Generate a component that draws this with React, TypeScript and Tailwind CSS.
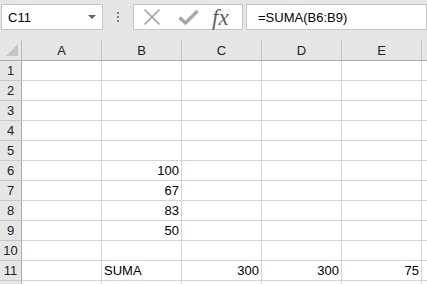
import React from "react";

const cols = ["A", "B", "C", "D", "E"];

type Cell = { v: string; left?: boolean };
const data: Record<number, Record<string, Cell>> = {
  6: { B: { v: "100" } },
  7: { B: { v: "67" } },
  8: { B: { v: "83" } },
  9: { B: { v: "50" } },
  11: {
    B: { v: "SUMA", left: true },
    C: { v: "300" },
    D: { v: "300" },
    E: { v: "75" },
  },
};

const rows = [1, 2, 3, 4, 5, 6, 7, 8, 9, 10, 11, 12];

export default function App() {
  return (
    <div
      className="w-[427px] h-[284px] overflow-hidden bg-white text-[13px] text-black"
      style={{ fontFamily: '"Liberation Sans", Arial, sans-serif' }}
    >
      {/* Formula bar */}
      <div className="h-[40px] bg-[#e6e6e6] flex items-start pt-[4px] pl-[1px]">
        <div className="w-[102px] h-[26px] shrink-0 bg-white border border-[#c6c6c6] flex items-center pl-[6px] pr-[6px]">
          <span className="flex-1 leading-none">C11</span>
          <svg width="8" height="4" viewBox="0 0 8 4">
            <polygon points="0,0 8,0 4,4" fill="#666" />
          </svg>
        </div>
        <div className="w-[30px] h-[26px] shrink-0 flex flex-col items-center justify-center gap-[2px]">
          <div className="w-[2px] h-[2px] bg-[#7a7a7a]" />
          <div className="w-[2px] h-[2px] bg-[#7a7a7a]" />
          <div className="w-[2px] h-[2px] bg-[#7a7a7a]" />
        </div>
        <div className="w-[110px] h-[26px] shrink-0 bg-white border border-[#c6c6c6] flex items-center">
          <svg className="ml-[9px]" width="18" height="18" viewBox="0 0 18 18">
            <path d="M1.5 1.5 L16.5 16.5 M16.5 1.5 L1.5 16.5" stroke="#a3a3a3" strokeWidth="1.7" fill="none" />
          </svg>
          <svg className="ml-[17px]" width="21" height="16" viewBox="0 0 21 16">
            <path d="M1.5 8.5 L7.5 14 L19.5 2" stroke="#a8a8a8" strokeWidth="3.4" fill="none" />
          </svg>
          <span
            className="ml-[13px] text-[23px] italic text-[#5e5e5e] leading-none"
            style={{ fontFamily: '"Liberation Serif", "Times New Roman", serif' }}
          >
            fx
          </span>
        </div>
        <div className="w-[3px] shrink-0" />
        <div className="flex-1 h-[26px] bg-white border border-[#c6c6c6] flex items-center pl-[11px]">
          <span className="leading-none">=SUMA(B6:B9)</span>
        </div>
      </div>

      {/* Column headers */}
      <div className="flex h-[21px] bg-[#e6e6e6] border-b border-[#ababab]">
        <div className="w-[22px] shrink-0 border-r border-[#bdbdbd] relative">
          <svg className="absolute left-[6px] top-[4px]" width="12" height="12" viewBox="0 0 12 12">
            <polygon points="12,0 12,12 0,12" fill="#c4c4c4" />
          </svg>
        </div>
        {cols.map((c) => (
          <div
            key={c}
            className="w-[80px] shrink-0 border-r border-[#c6c6c6] flex items-end justify-center leading-[19px] text-[#222]"
          >
            {c}
          </div>
        ))}
        <div className="flex-1" />
      </div>

      {/* Grid rows */}
      {rows.map((r) => (
        <div key={r} className="flex h-[20px]">
          <div className="w-[22px] shrink-0 bg-[#e6e6e6] border-r border-r-[#ababab] border-b border-b-[#c8c8c8] flex items-center justify-center leading-[19px] text-[#222]">
            {r < 12 ? r : ""}
          </div>
          {cols.map((c) => {
            const cell = data[r]?.[c];
            return (
              <div
                key={c}
                className={
                  cell?.left
                    ? "w-[80px] shrink-0 border-r border-b border-[#d4d4d4] flex items-center justify-start pl-[2px] leading-[19px] whitespace-nowrap"
                    : "w-[80px] shrink-0 border-r border-b border-[#d4d4d4] flex items-center justify-end pr-[2px] leading-[19px] whitespace-nowrap"
                }
              >
                {cell?.v ?? ""}
              </div>
            );
          })}
          <div className="flex-1 border-b border-[#d4d4d4]" />
        </div>
      ))}
    </div>
  );
}
